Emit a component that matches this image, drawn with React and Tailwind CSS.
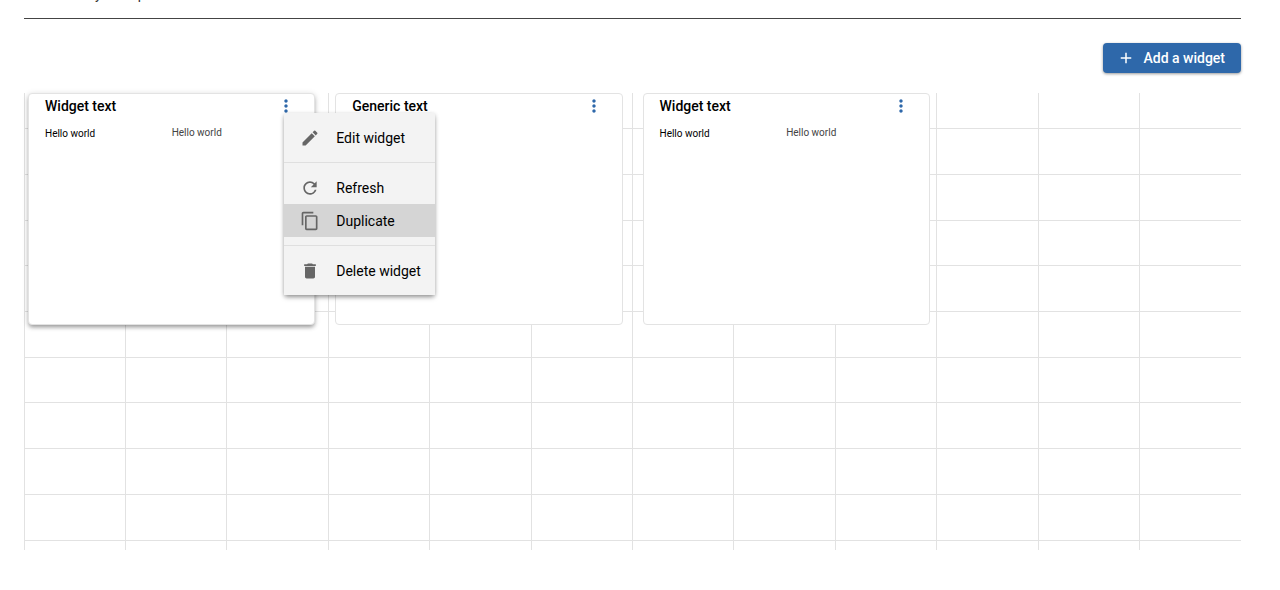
import React from "react";
import {
  MdAdd,
  MdContentCopy,
  MdDelete,
  MdEdit,
  MdMoreVert,
  MdRefresh,
} from "react-icons/md";

const widgets = [
  { title: "Widget text", label: "Hello world", text: "Hello world", open: true },
  { title: "Generic text" },
  { title: "Widget text", label: "Hello world", text: "Hello world" },
];

const columns = Array.from({ length: 12 });
const rows = Array.from({ length: 10 });

function MenuItem({ icon: Icon, children, active }) {
  return (
    <button
      type="button"
      role="menuitem"
      className={`flex h-[33px] w-full items-center gap-4 pr-3.5 pl-4 text-left text-sm whitespace-nowrap text-black ${
        active ? "bg-[#d5d5d5]" : "hover:bg-[#d5d5d5]"
      }`}
    >
      <Icon className="size-5 shrink-0 text-[#666666]" />
      {children}
    </button>
  );
}

function Divider() {
  return <hr className="my-2 border-t border-[#dfdfdf]" />;
}

function WidgetMenu() {
  return (
    <div
      role="menu"
      className="absolute top-[17px] left-2 z-10 bg-[#f3f3f3] py-2 shadow-[0_3px_5px_-1px_rgba(0,0,0,0.35),0_1px_4px_rgba(0,0,0,0.18)]"
    >
      <MenuItem icon={MdEdit}>Edit widget</MenuItem>
      <Divider />
      <MenuItem icon={MdRefresh}>Refresh</MenuItem>
      <MenuItem icon={MdContentCopy} active>
        Duplicate
      </MenuItem>
      <Divider />
      <MenuItem icon={MdDelete}>Delete widget</MenuItem>
    </div>
  );
}

function Widget({ title, label, text, open }) {
  return (
    <article
      className={`h-[232px] min-w-0 rounded border border-[#e3e3e3] bg-white ${
        open
          ? "relative z-10 shadow-[0_3px_4px_-1px_rgba(0,0,0,0.35),0_1px_6px_rgba(0,0,0,0.14)]"
          : ""
      }`}
    >
      <header className="flex h-6 items-center justify-between pr-[18px] pl-4">
        <h2 className="text-sm font-medium text-black">{title}</h2>
        <div className="relative flex">
          <button
            type="button"
            aria-label="More actions"
            aria-haspopup="menu"
            aria-expanded={Boolean(open)}
            className="text-[#2e68aa]"
          >
            <MdMoreVert className="size-5" />
          </button>
          {open && <WidgetMenu />}
        </div>
      </header>
      {label && (
        <div className="grid grid-cols-2 px-4 pt-[9px] text-[10px] leading-3">
          <p className="pt-px text-black">{label}</p>
          <p className="text-[#444444]">{text}</p>
        </div>
      )}
    </article>
  );
}

export default function App() {
  return (
    <main className="bg-white pr-[39px] pl-6 font-[Roboto,sans-serif]">
      <div
        aria-hidden="true"
        className="flex h-[18px] gap-9 overflow-hidden pl-[71px] text-sm leading-4 text-[#333333]"
      >
        <span className="-mt-3.5">y</span>
        <span className="-mt-3.5">p</span>
      </div>
      <hr className="border-t border-[#444444]" />
      <div className="flex justify-end pt-6 pb-5">
        <button
          type="button"
          className="flex h-[30px] items-center gap-2 rounded bg-[#2e68aa] pr-4 pl-3.5 text-sm font-medium text-white shadow-[0_1px_3px_rgba(0,0,0,0.4)]"
        >
          <MdAdd className="size-[18px]" />
          Add a widget
        </button>
      </div>
      <section className="grid">
        <div
          aria-hidden="true"
          className="grid [grid-area:1/1] grid-cols-[101fr_101fr_102fr_101fr_102fr_101fr_101fr_102fr_101fr_102fr_101fr_102fr]"
        >
          {columns.map((_, i) => (
            <div key={i} className="border-l border-[#e2e2e2]" />
          ))}
        </div>
        <div
          aria-hidden="true"
          className="grid [grid-area:1/1] grid-rows-[36px_46px_46px_45px_46px_46px_45px_46px_46px_46px] pb-[9px]"
        >
          {rows.map((_, i) => (
            <div key={i} className="border-b border-[#e2e2e2]" />
          ))}
        </div>
        <div className="grid [grid-area:1/1] grid-cols-4 items-start gap-5 px-1">
          {widgets.map((widget, i) => (
            <Widget key={i} {...widget} />
          ))}
        </div>
      </section>
    </main>
  );
}
